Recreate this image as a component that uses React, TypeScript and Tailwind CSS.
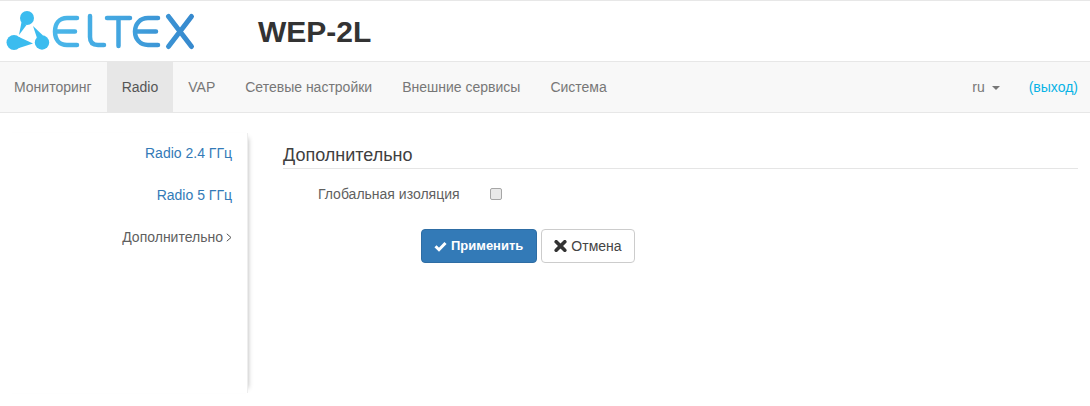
import React from "react";

function Logo() {
  return (
    <svg width="200" height="60" viewBox="0 1 200 60" className="block" fill="none">
      <defs>
        <linearGradient id="g" x1="50" x2="195" y1="0" y2="0" gradientUnits="userSpaceOnUse">
          <stop offset="0" stopColor="#4ab8ea" />
          <stop offset="0.5" stopColor="#42a4df" />
          <stop offset="1" stopColor="#3688cd" />
        </linearGradient>
      </defs>
      <g fill="#3bbcef">
        <circle cx="27" cy="18" r="7" />
        <path d="M21.5 22 L19 35 L26.5 25 Z" />
        <circle cx="14" cy="42.5" r="7.5" />
        <path d="M19 37 L33 43.5 L19 48 Z" />
        <circle cx="42" cy="42.5" r="7.2" />
        <path d="M37 38 L33 26 L43 35.5 Z" />
      </g>
      <g stroke="url(#g)" strokeWidth="4.5" strokeLinecap="round" strokeLinejoin="round">
        <path d="M77 18 H67 C59 18 55 24 55 31.5 C55 39 59 45 67 45 H77 M56 31.5 H75" />
        <path d="M90 16 V37 C90 43 93 45 98 45 H104" />
        <path d="M107 18 H130 M118.5 18 V46" />
        <path d="M158 18 H148 C140 18 135 24 135 31.5 C135 39 140 45 148 45 H158 M136 31.5 H156" />
        <path d="M168.5 16.5 L191.5 46.5 M191.5 16.5 L168.5 46.5" strokeWidth="5" />
      </g>
    </svg>
  );
}

export default function App() {
  return (
    <div className="w-[1090px] h-[406px] overflow-hidden bg-white font-['Liberation_Sans',Arial,sans-serif] text-[14px] text-[#333]">
      <header className="h-[61px] border-t border-[#e7e7e7] flex items-center">
        <div className="w-[258px] shrink-0"><Logo /></div>
        <h1 className="font-bold text-[30px] leading-[33px] text-[#333]">WEP-2L</h1>
      </header>
      <nav className="h-[52px] bg-[#f8f8f8] border-y border-[#e7e7e7] flex items-stretch text-[#777]">
        <a className="pl-[14px] pr-[15px] flex items-center">Мониторинг</a>
        <a className="px-[15px] flex items-center bg-[#e7e7e7] text-[#555]">Radio</a>
        <a className="px-[15px] flex items-center">VAP</a>
        <a className="px-[15px] flex items-center">Сетевые настройки</a>
        <a className="px-[15px] flex items-center">Внешние сервисы</a>
        <a className="px-[15px] flex items-center">Система</a>
        <div className="ml-auto flex items-center">
          <span>ru</span>
          <span className="ml-[7px] mt-[2px] w-0 h-0 border-x-[4px] border-x-transparent border-t-[4px] border-t-[#777]" />
          <a className="ml-[29px] mr-[12px] text-[#08b3e6]">(выход)</a>
        </div>
      </nav>
      <main className="flex pt-[20px]">
        <aside className="w-[248px] h-[260px] shrink-0 border-r border-[#eee] shadow-[5px_0_5px_-5px_rgba(0,0,0,0.3)] flex flex-col items-end pr-[15px] pt-[2px]">
          <a className="h-[42px] leading-[36px] text-[#337ab7]">Radio 2.4 ГГц</a>
          <a className="h-[42px] leading-[36px] text-[#337ab7]">Radio 5 ГГц</a>
          <a className="h-[42px] leading-[36px] text-[#5f5f5f] flex items-center self-end">
            <span className="-mt-[6px]">Дополнительно</span>
            <svg width="6" height="9" viewBox="0 0 6 9" className="ml-[3px] -mt-[6px]" fill="none">
              <path d="M0.8 0.8 L5 4.5 L0.8 8.2" stroke="#555" strokeWidth="1" />
            </svg>
          </a>
        </aside>
        <section className="ml-[35px] w-[795px] pt-[5px]">
          <h4 className="text-[18px] leading-[20px] pt-[7px] pb-[3px] border-b border-[#e5e5e5] text-[#404040] font-normal">Дополнительно</h4>
          <div className="flex items-center h-[20px] mt-[15px]">
            <label className="ml-[35px] w-[172px] text-[#5f5f5f]">Глобальная изоляция</label>
            <input type="checkbox" className="appearance-none w-[12px] h-[12px] m-0 border border-[#a6a6a6] rounded-[2px] bg-[#e9e9e9]" />
          </div>
          <div className="flex gap-[4px] ml-[138px] mt-[25px]">
            <button className="h-[34px] pl-[12px] pr-[13px] rounded-[4px] bg-[#337ab7] border border-[#2e6da4] text-white text-[13px] font-bold flex items-center gap-[4px]">
              <svg width="13" height="11" viewBox="0 0 13 11"><path d="M1.5 5.2 L5 8.7 L11.5 2" stroke="#fff" strokeWidth="3" fill="none" /></svg>
              Применить
            </button>
            <button className="h-[34px] px-[12px] rounded-[4px] bg-white border border-[#ccc] text-[#444] flex items-center gap-[4px]">
              <svg width="13" height="12" viewBox="0 0 13 12"><path d="M2.2 1.7 L10.8 10.3 M10.8 1.7 L2.2 10.3" stroke="#333" strokeWidth="3.6" fill="none" strokeLinecap="round" /></svg>
              Отмена
            </button>
          </div>
        </section>
      </main>
    </div>
  );
}
